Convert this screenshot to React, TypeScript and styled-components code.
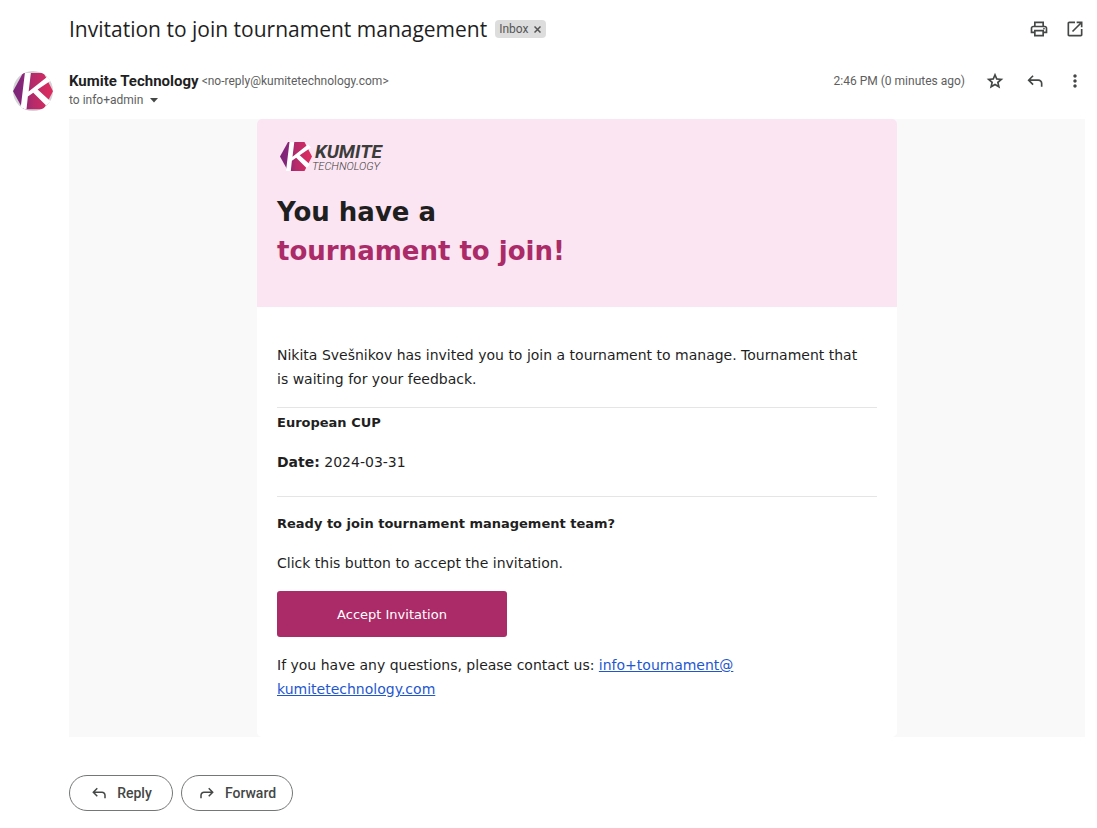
import React from 'react';
import styled, { createGlobalStyle } from 'styled-components';

const GlobalStyle = createGlobalStyle`
  *, *::before, *::after { box-sizing: border-box; }
  body {
    margin: 0;
    background: #fff;
    color: #1f1f1f;
    font-family: Roboto, "Liberation Sans", sans-serif;
  }
  h1, h2, h3, p { margin: 0; }
  svg { display: block; flex: none; }
  button { font-family: inherit; cursor: pointer; }
`;

const Page = styled.main`
  padding: 12px 12px 16px 13px;
`;

const SubjectRow = styled.header`
  display: flex;
  align-items: center;
  height: 34px;
  padding-left: 56px;
`;

const Subject = styled.h1`
  font-family: "Open Sans", sans-serif;
  font-size: 21px;
  line-height: 28px;
  font-weight: 400;
`;

const Label = styled.span`
  display: inline-flex;
  align-items: center;
  gap: 5px;
  height: 18px;
  margin-left: 8px;
  padding: 0 5px 0 4px;
  border-radius: 4px;
  background: #ddd;
  color: #555;
  font-size: 12px;
`;

const LabelClose = styled.button`
  display: flex;
  padding: 0;
  border: 0;
  background: none;
  color: #555;
`;

const Actions = styled.div`
  display: flex;
  gap: 16px;
  margin-left: auto;
`;

const IconButton = styled.button`
  display: flex;
  padding: 0;
  border: 0;
  background: none;
  color: #444746;
`;

const SenderRow = styled.section`
  display: flex;
  align-items: flex-start;
  height: 48px;
  margin-top: 25px;
`;

const SenderText = styled.div`
  flex: 1;
  margin-left: 16px;
`;

const SenderLine = styled.div`
  display: flex;
  align-items: center;
  gap: 3px;
  height: 20px;
`;

const SenderName = styled.h3`
  font-size: 15px;
  font-weight: 700;
`;

const Muted = styled.span`
  color: #5e5e5e;
  font-size: 12px;
`;

const Recipient = styled.button`
  display: flex;
  align-items: center;
  gap: 6px;
  padding: 0;
  border: 0;
  background: none;
  color: #5e5e5e;
  font-size: 12px;
  line-height: 18px;
`;

const SenderActions = styled.div`
  display: flex;
  align-items: center;
  gap: 20px;
  height: 20px;
`;

const TimeStamp = styled.time`
  color: #5e5e5e;
  font-size: 12px;
`;

const Message = styled.article`
  margin-left: 56px;
  background: #f9f9f9;
  font-family: Verdana, "DejaVu Sans", sans-serif;
  font-size: 14px;
  line-height: 24px;
`;

const Card = styled.div`
  max-width: 640px;
  margin: 0 auto;
  border-radius: 5px;
  overflow: hidden;
  background: #fff;
`;

const Banner = styled.div`
  padding: 20px 20px 36px;
  background: #fbe5f2;
`;

const Headline = styled.h2`
  margin-top: 20px;
  font-size: 26px;
  line-height: 39px;
  font-weight: 700;
`;

const Accent = styled.span`
  display: block;
  color: #ab2b68;
`;

const Content = styled.div`
  padding: 36px 20px;
`;

const Intro = styled.p`
  padding-right: 10px;
`;

const Details = styled.section`
  display: grid;
  gap: 15px;
  margin: 16px 0 15px;
  padding: 3px 0 22px;
  border: solid #e5e5e5;
  border-width: 1px 0;
`;

const Invite = styled.section`
  display: grid;
  gap: 15px;
  justify-items: start;
`;

const Title = styled.h3`
  font-size: 13px;
  font-weight: 700;
`;

const AcceptButton = styled.button`
  width: 230px;
  height: 46px;
  margin: 1px 0;
  border: 0;
  border-radius: 3px;
  background: #ab2b68;
  color: #fff;
  font-size: 13px;
`;

const MailLink = styled.a`
  color: #1f57cf;
`;

const Replies = styled.footer`
  display: flex;
  gap: 8px;
  margin: 38px 0 0 56px;
`;

const ReplyButton = styled.button<{ $width: number }>`
  display: flex;
  align-items: center;
  justify-content: center;
  gap: 9px;
  width: ${(p) => p.$width}px;
  height: 36px;
  padding: 0;
  border: 1px solid #747775;
  border-radius: 18px;
  background: #fff;
  color: #444746;
  font-size: 14px;
  font-weight: 500;
`;

const paths = {
  print:
    'M16 8V5H8v3H6V3h12v5zM18 12.5q.425 0 .713-.288T19 11.5t-.288-.712T18 10.5t-.712.288T17 11.5t.288.713.712.287M16 19v-4H8v4zm2 2H6v-4H2v-6q0-1.275.875-2.137T5 8h14q1.275 0 2.138.863T22 11v6h-4zm2-6v-4q0-.425-.288-.712T19 10H5q-.425 0-.712.288T4 11v4h2v-2h12v2z',
  open:
    'M5 21q-.825 0-1.412-.587T3 19V5q0-.825.588-1.412T5 3h7v2H5v14h14v-7h2v7q0 .825-.587 1.413T19 21zm4.7-5.3-1.4-1.4L17.6 5H14V3h7v7h-2V6.4z',
  star:
    'm8.85 16.825 3.15-1.9 3.15 1.925-.825-3.6 2.775-2.4-3.65-.325-1.45-3.4-1.45 3.375-3.65.325 2.775 2.425zM5.825 21l1.625-7.025L2 9.25l7.2-.625L12 2l2.8 6.625 7.2.625-5.45 4.725L18.175 21 12 17.275z',
  reply:
    'M19 19v-4q0-1.25-.875-2.125T16 12H6.8l3.6 3.6L9 17l-6-6 6-6 1.4 1.4L6.8 10H16q2.075 0 3.538 1.463T21 15v4z',
  forward:
    'M5 19v-4q0-1.25.875-2.125T8 12h9.2l-3.6 3.6L15 17l6-6-6-6-1.4 1.4L17.2 10H8q-2.075 0-3.537 1.463T3 15v4z',
  more:
    'M12 20q-.825 0-1.412-.587T10 18t.588-1.412T12 16t1.413.588T14 18t-.587 1.413T12 20m0-6q-.825 0-1.412-.587T10 12t.588-1.412T12 10t1.413.588T14 12t-.587 1.413T12 14m0-6q-.825 0-1.412-.587T10 6t.588-1.412T12 4t1.413.588T14 6t-.587 1.413T12 8',
};

const Icon = ({ name, size = 20 }: { name: keyof typeof paths; size?: number }) => (
  <svg width={size} height={size} viewBox="0 0 24 24" fill="currentColor" aria-hidden="true">
    <path d={paths[name]} />
  </svg>
);

const Mark = ({ id }: { id: string }) => (
  <>
    <defs>
      <linearGradient id={id} x1="0" x2="1">
        <stop offset="0" stopColor="#7a2577" />
        <stop offset="0.22" stopColor="#85267a" />
        <stop offset="0.5" stopColor="#b52b69" />
        <stop offset="1" stopColor="#e02b5e" />
      </linearGradient>
    </defs>
    <path d="M8 0H24.500L32 14.500L24.500 29H8L0 14.500Z" fill={`url(#${id})`} />
    <path d="M9.500 0H14.300L12.500 14.800L28 2.500L31 5.500L19.700 13.200L30 22.500L26.500 26L16.200 15.800L11.900 18.800L10.800 29H6Z" fill="#fff" />
  </>
);

const Avatar = () => (
  <svg width="40" height="40" viewBox="0 0 40 40" role="img" aria-label="Kumite Technology">
    <defs>
      <clipPath id="avatar-clip"><circle cx="20" cy="20" r="20" /></clipPath>
    </defs>
    <g clipPath="url(#avatar-clip)">
      <rect width="40" height="40" fill="#d3d3d6" />
      <g transform="translate(0 2) scale(1.25)"><Mark id="avatar-fill" /></g>
    </g>
  </svg>
);

const Logo = () => (
  <svg width="108" height="34" viewBox="0 0 108 34" role="img" aria-label="Kumite Technology">
    <g transform="translate(3 3)"><Mark id="logo-fill" /></g>
    <text x="38" y="19" fontFamily="Roboto" fontSize="19" fontWeight="700" fontStyle="italic" fill="#3c3c3b">KUMITE</text>
    <text x="35" y="31" fontFamily="Roboto" fontSize="11" fontWeight="300" fontStyle="italic" fill="#3c3c3b">TECHNOLOGY</text>
  </svg>
);

export default function App() {
  return (
    <>
      <GlobalStyle />
      <Page>
        <SubjectRow>
          <Subject>Invitation to join tournament management</Subject>
          <Label>
            Inbox
            <LabelClose aria-label="Remove label Inbox">
              <svg width="7" height="7" viewBox="0 0 7 7" stroke="currentColor" strokeWidth="1.500">
                <path d="M.5 .5L6.500 6.500M6.500 .5L.5 6.500" />
              </svg>
            </LabelClose>
          </Label>
          <Actions>
            <IconButton aria-label="Print"><Icon name="print" /></IconButton>
            <IconButton aria-label="Open in new window"><Icon name="open" /></IconButton>
          </Actions>
        </SubjectRow>

        <SenderRow>
          <Avatar />
          <SenderText>
            <SenderLine>
              <SenderName>Kumite Technology</SenderName>
              <Muted>&lt;no-reply@kumitetechnology.com&gt;</Muted>
            </SenderLine>
            <Recipient>
              to info+admin
              <svg width="10" height="5" viewBox="0 0 10 5" fill="#444746"><path d="M1 0H9L5 4.500Z" /></svg>
            </Recipient>
          </SenderText>
          <SenderActions>
            <TimeStamp>2:46 PM (0 minutes ago)</TimeStamp>
            <IconButton aria-label="Star"><Icon name="star" /></IconButton>
            <IconButton aria-label="Reply"><Icon name="reply" /></IconButton>
            <IconButton aria-label="More"><Icon name="more" /></IconButton>
          </SenderActions>
        </SenderRow>

        <Message>
          <Card>
            <Banner>
              <Logo />
              <Headline>
                You have a <Accent>tournament to join!</Accent>
              </Headline>
            </Banner>
            <Content>
              <Intro>
                Nikita Svešnikov has invited you to join a tournament to manage. Tournament that is
                waiting for your feedback.
              </Intro>
              <Details>
                <Title>European CUP</Title>
                <p><strong>Date:</strong> 2024-03-31</p>
              </Details>
              <Invite>
                <Title>Ready to join tournament management team?</Title>
                <p>Click this button to accept the invitation.</p>
                <AcceptButton>Accept Invitation</AcceptButton>
                <p>
                  If you have any questions, please contact us:{' '}
                  <MailLink href="mailto:info+tournament@kumitetechnology.com">
                    info+tournament@<wbr />kumitetechnology.com
                  </MailLink>
                </p>
              </Invite>
            </Content>
          </Card>
        </Message>

        <Replies>
          <ReplyButton $width={104}><Icon name="reply" size={18} />Reply</ReplyButton>
          <ReplyButton $width={112}><Icon name="forward" size={18} />Forward</ReplyButton>
        </Replies>
      </Page>
    </>
  );
}
